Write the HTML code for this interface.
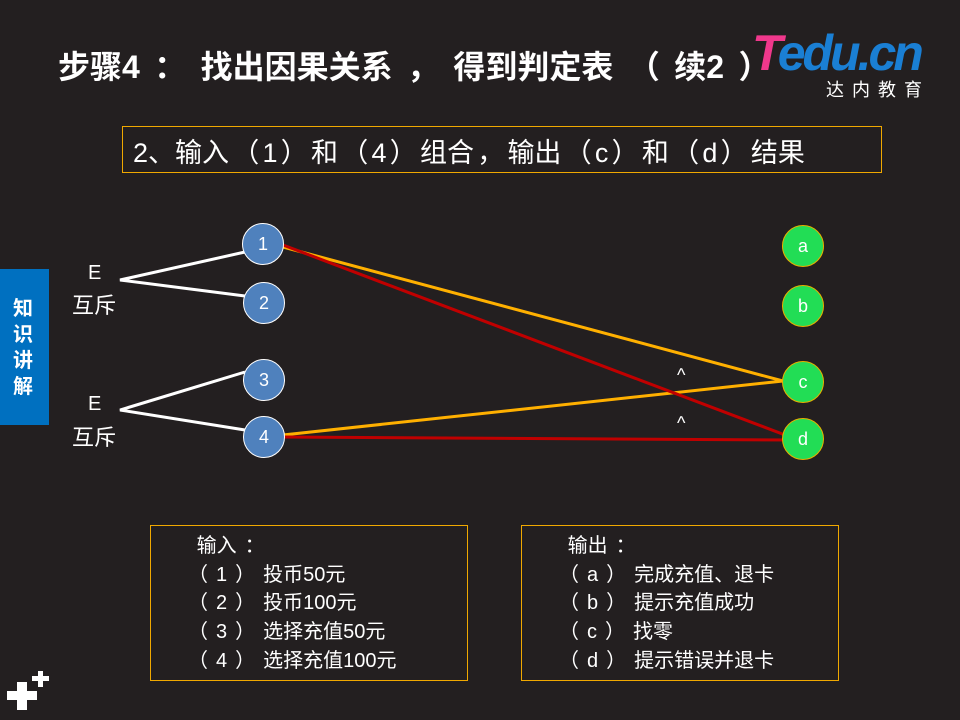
<!DOCTYPE html>
<html><head><meta charset="utf-8"><style>
body{margin:0;width:960px;height:720px;background:#231f20;position:relative;overflow:hidden;font-family:"Liberation Sans","Noto Sans CJK SC",sans-serif;color:#fff}
.a{position:absolute;white-space:nowrap}
i{font-style:normal}
.ti i{padding:0 0.45em}
.tb i{padding:0 0.12em}
.t i{padding:0 0.4em}
.box{position:absolute;border:1px solid #f0a800;box-sizing:border-box}
.n{position:absolute;width:42px;height:42px;border-radius:50%;box-sizing:border-box;text-align:center;line-height:40px;font-size:18px}
.bl{background:#4f81bd;border:1.5px solid #fff}
.gr{background:#22dd55;border:1.5px solid #e8b000}
.t{font-size:20px;line-height:28.7px}
</style></head><body>
<div class="a ti" style="left:58px;top:42px;font-size:32px;font-weight:bold">步骤4<i>：</i>找出因果关系<i>，</i>得到判定表<i>（</i>续2<i>）</i></div>
<div class="a" style="left:752px;top:24px;font-size:50px;font-weight:bold;font-style:italic;letter-spacing:-3px"><span style="color:#f0388c">T</span><span style="color:#1a7fd4">edu.cn</span></div>
<div class="a" style="left:826px;top:76px;font-size:18px;letter-spacing:8px">达内教育</div>
<div class="box" style="left:122px;top:126px;width:760px;height:47px"></div>
<div class="a tb" style="left:133px;top:131px;font-size:27px">2、输入<i>（</i>1<i>）</i>和<i>（</i>4<i>）</i>组合<i>，</i>输出<i>（</i>c<i>）</i>和<i>（</i>d<i>）</i>结果</div>
<div class="a" style="left:0;top:269px;width:49px;height:156px;background:#0070c0"></div>
<div class="a" style="left:13px;top:296px;font-size:20px;font-weight:bold;line-height:26px;white-space:normal;width:24px">知识讲解</div>
<svg class="a" style="left:0;top:0" width="960" height="720">
<polyline points="245,252 120,280 245,296" fill="none" stroke="#fff" stroke-width="3"/>
<polyline points="245,372 120,410 245,430" fill="none" stroke="#fff" stroke-width="3"/>
<line x1="283" y1="247" x2="783" y2="381" stroke="#ffb000" stroke-width="3"/>
<line x1="283" y1="435" x2="783" y2="381" stroke="#ffb000" stroke-width="3"/>
<line x1="283" y1="245" x2="793" y2="438" stroke="#c00000" stroke-width="3"/>
<line x1="283" y1="437" x2="793" y2="440" stroke="#c00000" stroke-width="3"/>
<rect x="7" y="691" width="30" height="9" fill="#fff"/><rect x="17" y="682" width="10" height="28" fill="#fff"/>
<rect x="32" y="676" width="17" height="5" fill="#fff"/><rect x="38" y="671" width="5" height="16" fill="#fff"/>
</svg>
<div class="a" style="left:88px;top:262px;font-size:20px">E</div>
<div class="a" style="left:72px;top:288px;font-size:22px">互斥</div>
<div class="a" style="left:88px;top:393px;font-size:20px">E</div>
<div class="a" style="left:72px;top:420px;font-size:22px">互斥</div>
<div class="n bl" style="left:242px;top:223px">1</div>
<div class="n bl" style="left:243px;top:282px">2</div>
<div class="n bl" style="left:243px;top:359px">3</div>
<div class="n bl" style="left:243px;top:416px">4</div>
<div class="n gr" style="left:782px;top:225px">a</div>
<div class="n gr" style="left:782px;top:285px">b</div>
<div class="n gr" style="left:782px;top:361px">c</div>
<div class="n gr" style="left:782px;top:418px">d</div>
<div class="a" style="left:677px;top:365px;font-size:18px">^</div>
<div class="a" style="left:677px;top:413px;font-size:18px">^</div>
<div class="box" style="left:150px;top:525px;width:318px;height:156px"></div>
<div class="a t" style="left:180px;top:532px">&nbsp;&nbsp;&nbsp;输入<i>：</i><br><i>（</i>1<i>）</i>投币50元<br><i>（</i>2<i>）</i>投币100元<br><i>（</i>3<i>）</i>选择充值50元<br><i>（</i>4<i>）</i>选择充值100元</div>
<div class="box" style="left:521px;top:525px;width:318px;height:156px"></div>
<div class="a t" style="left:551px;top:532px">&nbsp;&nbsp;&nbsp;输出<i>：</i><br><i>（</i>a<i>）</i>完成充值、退卡<br><i>（</i>b<i>）</i>提示充值成功<br><i>（</i>c<i>）</i>找零<br><i>（</i>d<i>）</i>提示错误并退卡</div>
</body></html>
